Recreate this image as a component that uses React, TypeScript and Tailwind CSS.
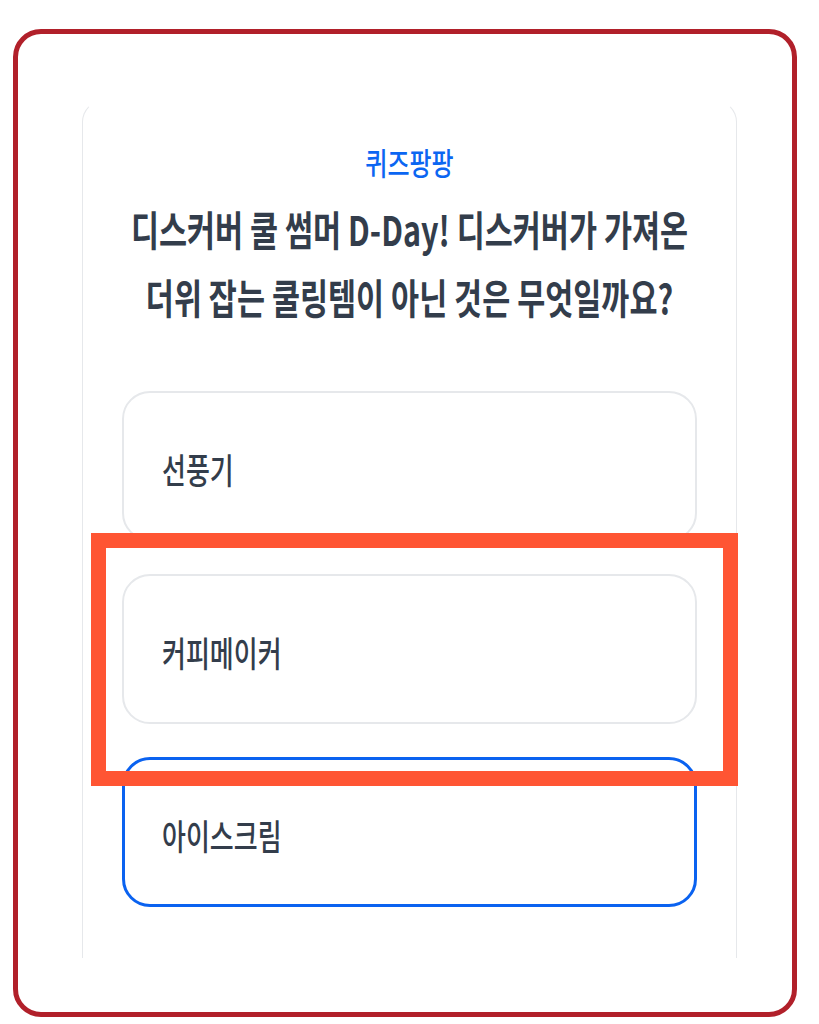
const options = [
  { label: "선풍기", selected: false },
  { label: "커피메이커", selected: false },
  { label: "아이스크림", selected: true },
];

export default function App() {
  return (
    <div
      className="relative min-h-screen bg-white pt-[29px] text-[#333d4b]"
      style={{ fontFamily: '"Noto Sans CJK KR", "Noto Sans", sans-serif' }}
    >
      <div className="ml-[13px] h-[988px] w-[784px] rounded-[28px] border-[5px] border-[#b1202a] pl-[64px] pt-[66px]">
        <div className="h-[858px] w-[655px] rounded-t-[22px] border-x-[1.5px] border-t border-[#e6e8eb] border-t-transparent px-[39px]">
          <p className="mt-[46px] h-[30px] scale-y-[1.3] text-center text-[24px] font-medium leading-[30px] text-[#0b66f2]">
            퀴즈팡팡
          </p>
          <h1 className="mt-[17px] text-center text-[30.5px] font-bold leading-[68px]">
            <span className="block scale-y-[1.35]">디스커버 쿨 썸머 D-Day! 디스커버가 가져온</span>
            <span className="block scale-y-[1.35]">더위 잡는 쿨링템이 아닌 것은 무엇일까요?</span>
          </h1>
          <div className="mt-[61px] flex flex-col gap-[33px]">
            {options.map((o) => (
              <button
                key={o.label}
                className={`flex h-[150px] w-full items-center rounded-[28px] bg-white text-left ${
                  o.selected
                    ? "border-[3px] border-[#0a62f0] pl-[37px]"
                    : "border-2 border-[#e6e8eb] pl-[38px]"
                }`}
              >
                <span className="inline-block translate-y-[2px] scale-y-[1.35] text-[26px] font-medium">
                  {o.label}
                </span>
              </button>
            ))}
          </div>
        </div>
      </div>
      <div className="absolute left-[91px] top-[533px] h-[253px] w-[647px] border-[15px] border-[#ff5533]" />
    </div>
  );
}
